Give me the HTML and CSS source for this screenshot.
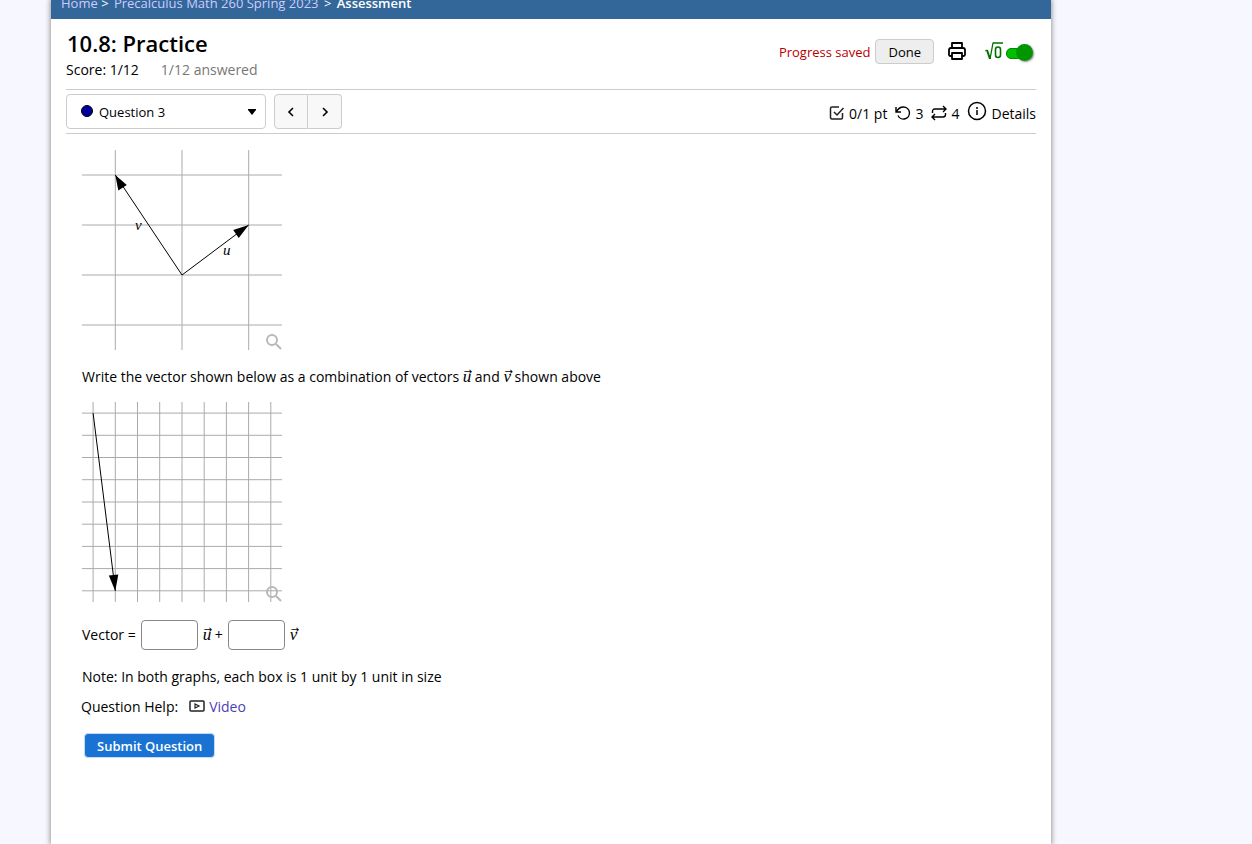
FILE: index.html
```html
<!DOCTYPE html>
<html lang="en">
<head>
  <title>10.8: Practice</title>
  <meta charset="UTF-8">
  <meta name="viewport" content="width=device-width, initial-scale=1.0">
  <link rel="stylesheet" href="styles.css">
</head>
<body>
  <div class="container">
    <nav class="breadcrumb">
      <a href="#">Home</a> &gt; <a href="#">Precalculus Math 260 Spring 2023</a> &gt; <span>Assessment</span>
    </nav>

    <header class="assess-header">
      <div>
        <h1>10.8: Practice</h1>
        <div class="score"><span>Score: 1/12</span><span class="answered">1/12 answered</span></div>
      </div>
      <div class="header-tools">
        <span class="saved">Progress saved</span>
        <button type="button" class="done">Done</button>
        <button type="button" class="icon-button" aria-label="Print">
          <svg width="20" height="20" viewBox="0 0 20 20" fill="none" stroke="#000" stroke-width="1.800" stroke-linejoin="round">
            <path d="M5 6V1h10v5M5 14H3.500Q2 14 2 12.500V8q0-2 2-2h12q2 0 2 2v4.500Q18 14 16.500 14H15M5 11h10v6H5z"/>
          </svg>
        </button>
        <label class="math-toggle">
          <svg width="20" height="20" viewBox="0 0 20 20" fill="none" stroke="#007000" stroke-linejoin="round">
            <path stroke-width="1" d="M1 9l2-1"/>
            <path stroke-width="2" d="M3 8l3 9"/>
            <path stroke-width="1.300" d="M6 17L9 1h10"/>
            <rect x="11.500" y="5" width="5" height="10.500" rx="2.500" stroke-width="1.600"/>
          </svg>
          <input type="checkbox" role="switch" aria-label="Equation editor" checked>
        </label>
      </div>
    </header>

    <div class="question-bar">
      <div class="question-select">
        <svg width="12" height="14" viewBox="0 0 12 14"><circle cx="6" cy="6" r="5.500" fill="#00009c" stroke="#000"/></svg>
        <select aria-label="Select question">
          <option>Question 3</option>
        </select>
        <svg width="8" height="6" viewBox="0 0 8 6"><path d="M0 0h8v1L4 6 0 1z"/></svg>
      </div>
      <div class="pager">
        <button type="button" aria-label="Previous question">
          <svg width="8" height="10" viewBox="0 0 8 10" fill="none" stroke="#000" stroke-width="1.600"><path d="M6 1L2 5l4 4"/></svg>
        </button>
        <button type="button" aria-label="Next question">
          <svg width="8" height="10" viewBox="0 0 8 10" fill="none" stroke="#000" stroke-width="1.600"><path d="M2 1l4 4-4 4"/></svg>
        </button>
      </div>
      <div class="details">
        <svg width="16" height="18" viewBox="0 0 16 18" fill="none" stroke="#222" stroke-width="1.500">
          <path d="M10 2H3Q1.500 2 1.500 3.500v9Q1.500 14 3 14h9q1.500 0 1.500-1.500V8"/>
          <path d="M5 7l3 3 6.500-7"/>
        </svg>
        <span class="points">0/1 pt</span>
        <svg width="16" height="18" viewBox="0 0 16 18" fill="none" stroke="#000" stroke-width="1.400">
          <path d="M1 2v5h5M1.500 7C3 3.500 5.500 2 8.500 2a6 6 0 1 1-5.500 8.500"/>
        </svg>
        <span class="tries">3</span>
        <svg width="16" height="18" viewBox="0 0 16 18" fill="none" stroke="#000" stroke-width="1.400">
          <path d="M12 1l3 3-3 3M15 4H4Q1.500 4 1.500 6.500V8M4 9l-3 3 3 3M1 12h11q2.500 0 2.500-2.500V8"/>
        </svg>
        <span class="versions">4</span>
        <button type="button" class="details-button">
          <svg width="20" height="20" viewBox="0 0 20 20" fill="none" stroke="#000" stroke-width="1.500">
            <circle cx="10" cy="10" r="8.500"/><path d="M10 9v5M10 6v2"/>
          </svg>
          Details
        </button>
      </div>
    </div>

    <main class="question">
      <div class="graph">
        <svg width="200" height="200" viewBox="0 0 200 200" role="img" aria-label="Vectors u and v on a grid">
          <path class="grid" d="M33.300 0v200M100 0v200M166.700 0v200M0 25h200M0 75h200M0 125h200M0 175h200"/>
          <path class="vector" d="M33.300 25L100 125 166.700 75"/>
          <path d="M33.300 25l3 15.500 8.500-5.500zM166.700 75l-15.500 5 5.500 8z"/>
          <text x="53" y="80">v</text>
          <text x="141" y="105">u</text>
        </svg>
        <button type="button" class="zoom" aria-label="Enlarge graph">
          <svg width="16" height="16" viewBox="0 0 16 16" fill="none" stroke="#b8b8b8" stroke-width="2"><circle cx="6" cy="6" r="5"/><path d="M10 10l5 5"/></svg>
        </button>
      </div>

      <p>Write the vector shown below as a combination of vectors <span class="vec">u</span> and <span class="vec">v</span> shown above</p>

      <div class="graph">
        <svg width="200" height="200" viewBox="0 0 200 200" role="img" aria-label="Vector on a grid">
          <path class="grid" d="M11.100 0v200M33.300 0v200M55.500 0v200M77.700 0v200M100 0v200M122.200 0v200M144.400 0v200M166.600 0v200M188.800 0v200M0 11.100h200M0 33.300h200M0 55.500h200M0 77.700h200M0 100h200M0 122.200h200M0 144.400h200M0 166.600h200M0 188.800h200"/>
          <path class="vector" d="M11.100 11.100L33.300 188.900"/>
          <path d="M33.300 189l-6.500-15.500 9.500-1z"/>
        </svg>
        <button type="button" class="zoom" aria-label="Enlarge graph">
          <svg width="16" height="16" viewBox="0 0 16 16" fill="none" stroke="#b8b8b8" stroke-width="2"><circle cx="6" cy="6" r="5"/><path d="M10 10l5 5"/></svg>
        </button>
      </div>

      <div class="answer">
        <span>Vector =</span>
        <input type="text" aria-label="Coefficient of u">
        <span><span class="vec">u</span> +</span>
        <input type="text" aria-label="Coefficient of v">
        <span class="vec">v</span>
      </div>

      <p>Note: In both graphs, each box is 1 unit by 1 unit in size</p>
    </main>

    <div class="help">
      <span>Question Help:</span>
      <a href="#">
        <svg width="16" height="14" viewBox="0 0 16 14" fill="none" stroke="#222" stroke-width="1.500"><rect x="1" y="1" width="14" height="10" rx="1"/><path stroke-width="1.200" d="M6 4v4l4-2z"/></svg>
        Video
      </a>
    </div>
    <button type="submit" class="submit">Submit Question</button>
  </div>
</body>
</html>
```
FILE: styles.css
```css
* {
  box-sizing: border-box;
}
body {
  margin: 0;
  background-color: #f7f7ff;
  font-family: "Trebuchet MS", "Open Sans", sans-serif;
  font-size: 14px;
  line-height: 20px;
  color: #000;
}
button, input, select {
  font: inherit;
  color: inherit;
}
button {
  cursor: pointer;
}
svg {
  display: block;
  flex: none;
}
.container {
  max-width: 1000px;
  min-height: 100vh;
  margin-left: 51px;
  background-color: #fff;
  box-shadow: 0 0 5px 1px #999;
}
.breadcrumb {
  padding: 0 10px 13px;
  background-color: #336699;
  color: #fff;
  font-size: 13px;
  font-weight: 500;
  line-height: 6px;
}
.breadcrumb a {
  color: #ccccff;
  text-decoration: none;
}
.breadcrumb a + a {
  margin: 0 2px;
}
.breadcrumb span {
  margin-left: 2px;
  font-weight: 600;
}

/* Title, score and tools */
.assess-header {
  display: flex;
  justify-content: space-between;
  align-items: flex-start;
  height: 71px;
  margin: 0 15px;
  padding-top: 12px;
  border-bottom: 1px solid #ccc;
}
h1 {
  margin: 0 0 4px 1px;
  font-size: 22px;
  line-height: 25px;
  font-weight: 600;
}
.score {
  display: flex;
  gap: 22px;
}
.answered {
  color: #777;
}
.header-tools {
  display: flex;
  align-items: center;
  padding-top: 8px;
  font-size: 13px;
}
.saved {
  color: #b80000;
}
.done {
  height: 25px;
  margin: 0 13px 0 5px;
  padding: 0 12px;
  border: 1px solid #ccc;
  border-radius: 4px;
  background-color: #eee;
}
.icon-button {
  padding: 0;
  border: 0;
  background: none;
}
.math-toggle {
  display: flex;
  align-items: center;
  gap: 2px;
  margin: 0 2px 0 17px;
}
.math-toggle input {
  appearance: none;
  position: relative;
  width: 28px;
  height: 18px;
  margin: 0;
}
.math-toggle input::before {
  content: "";
  position: absolute;
  left: 0;
  top: 5px;
  width: 22px;
  height: 9px;
  border: 1px solid #080;
  border-radius: 5px;
  background-color: #00c000;
}
.math-toggle input::after {
  content: "";
  position: absolute;
  right: 1px;
  top: 1px;
  width: 17px;
  height: 17px;
  border-radius: 50%;
  background-color: #009600;
  box-shadow: 1px 1px 2px #888;
}

/* Question navigation */
.question-bar {
  display: flex;
  align-items: center;
  height: 44px;
  margin: 0 15px;
  border-bottom: 1px solid #ccc;
}
.question-select {
  display: flex;
  align-items: center;
  width: 200px;
  height: 35px;
  padding: 0 9px 0 14px;
  border: 1px solid #ccc;
  border-radius: 4px;
}
.question-select select {
  flex: 1;
  appearance: none;
  margin: 0;
  padding: 0 6px;
  border: 0;
  background: none;
  font-size: 13px;
}
.pager {
  display: flex;
  margin-left: 8px;
}
.pager button {
  display: flex;
  align-items: center;
  justify-content: center;
  width: 34px;
  height: 35px;
  padding: 0;
  border: 1px solid #ccc;
  background-color: #f8f8f8;
}
.pager button:first-child {
  border-radius: 4px 0 0 4px;
}
.pager button:last-child {
  border-left: 0;
  border-radius: 0 4px 4px 0;
}
.details {
  display: flex;
  align-items: center;
  margin-left: auto;
  padding-top: 4px;
}
.points, .tries, .versions {
  margin: 0 8px 0 4px;
}
.details-button {
  display: flex;
  align-items: center;
  gap: 4px;
  padding: 0;
  border: 0;
  background: none;
}
.details-button svg {
  margin-bottom: 6px;
}

/* Question body */
.question {
  padding: 16px 31px 0;
}
.graph {
  position: relative;
  width: 200px;
}
.graph text {
  font: italic 15px "Liberation Serif", serif;
}
.grid {
  fill: none;
  stroke: #aaa;
}
.vector {
  fill: none;
  stroke: #000;
}
.zoom {
  position: absolute;
  right: 0;
  bottom: 0;
  padding: 0;
  border: 0;
  background: none;
}
.question p {
  margin: 17px 0 15px;
}
.vec {
  position: relative;
  font: italic 17px/20px "Liberation Serif", serif;
}
.vec::before {
  content: "→";
  position: absolute;
  left: 1px;
  top: 0;
  font: 10px/10px "DejaVu Sans", sans-serif;
}
.answer {
  display: flex;
  align-items: center;
  gap: 5px;
  margin-top: 18px;
}
.answer input {
  width: 57px;
  height: 30px;
  padding: 4px;
  border: 1px solid #888;
  border-radius: 4px;
}
.help {
  display: flex;
  gap: 11px;
  margin: -5px 30px 0;
}
.help a {
  display: flex;
  align-items: center;
  gap: 4px;
  color: #4b3fb5;
  text-decoration: none;
}
.submit {
  display: block;
  height: 25px;
  margin: 16px 33px;
  padding: 0 12px;
  border: 1px solid #c4dcf4;
  border-radius: 4px;
  background-color: #1a73d2;
  color: #fff;
  font-size: 13px;
  font-weight: 600;
}
```
